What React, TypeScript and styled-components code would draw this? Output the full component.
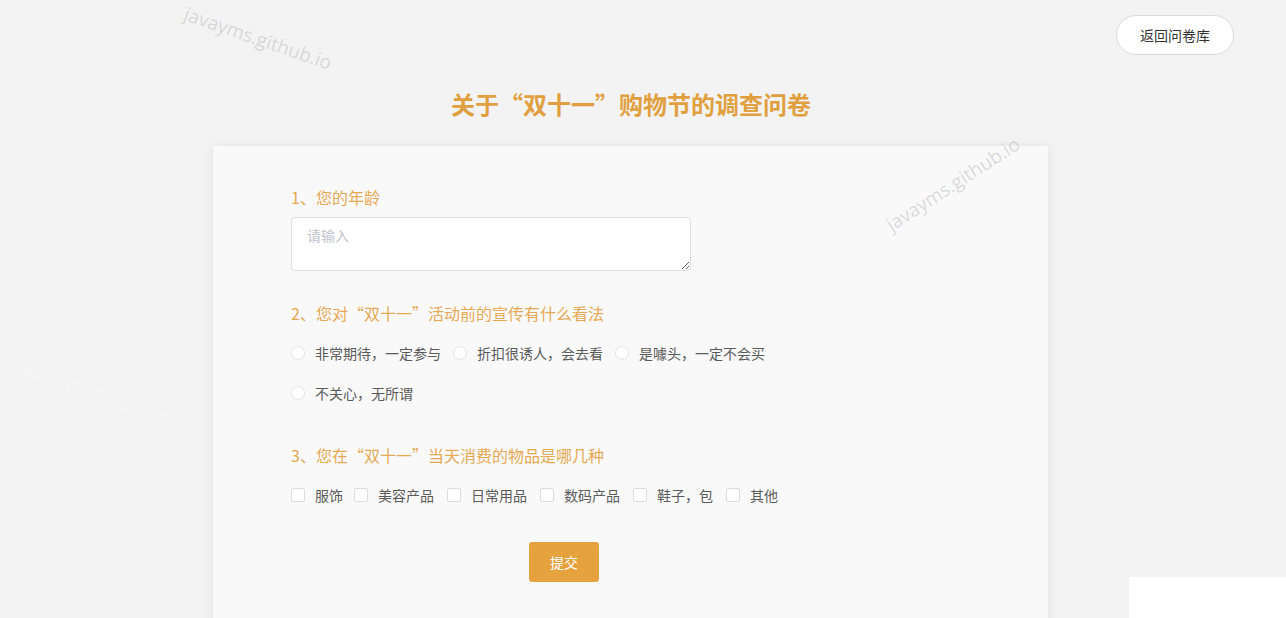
import React from "react";
import styled, { createGlobalStyle } from "styled-components";

const GlobalStyle = createGlobalStyle`
  html, body {
    margin: 0;
    padding: 0;
    background: #f3f3f3;
    font-family: "Noto Sans CJK SC", "Noto Sans", sans-serif;
    overflow: hidden;
  }
`;

const radioOptions = [
  ["非常期待，一定参与", "折扣很诱人，会去看", "是噱头，一定不会买"],
  ["不关心，无所谓"],
];

const checkOptions = ["服饰", "美容产品", "日常用品", "数码产品", "鞋子，包", "其他"];

const App = () => {
  return (
    <Page>
      <GlobalStyle />
      <TopBar>
        <BackButton>返回问卷库</BackButton>
      </TopBar>
      <Title>关于“双十一”购物节的调查问卷</Title>
      <Card>
        <Question>
          <Label>1、您的年龄</Label>
          <TextArea placeholder="请输入" />
        </Question>

        <Question>
          <Label>2、您对“双十一”活动前的宣传有什么看法</Label>
          {radioOptions.map((row, i) => (
            <OptionRow key={i}>
              {row.map((o) => (
                <Option key={o}>
                  <Radio />
                  <OptionText>{o}</OptionText>
                </Option>
              ))}
            </OptionRow>
          ))}
        </Question>

        <Question>
          <Label>3、您在“双十一”当天消费的物品是哪几种</Label>
          <OptionRow>
            {checkOptions.map((o, i) => (
              <Option key={o} $gap={i === 0 ? 11 : 13}>
                <Check />
                <OptionText>{o}</OptionText>
              </Option>
            ))}
          </OptionRow>
        </Question>

        <SubmitWrap>
          <Submit>提交</Submit>
        </SubmitWrap>
      </Card>

      <Watermark $x={185} $y={0} $deg={19}>javayms.github.io</Watermark>
      <Watermark $x={888} $y={213} $deg={-33}>javayms.github.io</Watermark>
      <Watermark $x={20} $y={352} $deg={20} $faint>javayms.github.io</Watermark>
      <Watermark $x={1125} $y={455} $deg={-45} $faint>javayms.github.io</Watermark>
      <Corner />
    </Page>
  );
};

export default App;

const Page = styled.div`
  position: relative;
  width: 100%;
  height: 618px;
  overflow: hidden;
  background: #f3f3f3;
`;

const TopBar = styled.div`
  display: flex;
  justify-content: flex-end;
  padding: 15px 52px 0 0;
`;

const BackButton = styled.button`
  width: 118px;
  height: 40px;
  border-radius: 20px;
  border: 1px solid #dcdcdc;
  background: #fff;
  color: #333;
  font-size: 14px;
  font-family: "Noto Sans CJK SC", sans-serif;
  cursor: pointer;
`;

const Title = styled.h1`
  margin: 34px 0 0;
  padding-right: 24px;
  text-align: center;
  font-size: 24px;
  line-height: 30px;
  font-weight: bold;
  color: #e1a040;
`;

const Card = styled.div`
  margin: 27px 0 0 213px;
  width: 835px;
  height: 520px;
  box-sizing: border-box;
  background: #f9f9f9;
  box-shadow: 0 0 10px rgba(0, 0, 0, 0.07);
  padding: 39px 0 0 78px;
`;

const Question = styled.div`
  margin-bottom: 30px;
`;

const Label = styled.div`
  font-size: 16px;
  line-height: 24px;
  color: #e6a955;
  margin-bottom: 8px;
`;

const TextArea = styled.textarea`
  display: block;
  width: 400px;
  height: 54px;
  box-sizing: border-box;
  border: 1px solid #dcdfe6;
  border-radius: 4px;
  background: #fff;
  padding: 7px 15px;
  font-size: 14px;
  font-family: "Noto Sans CJK SC", sans-serif;
  color: #606266;
  outline: none;
  &::placeholder {
    color: #c0c4cc;
  }
`;

const OptionRow = styled.div`
  display: flex;
  align-items: center;
  height: 40px;
`;

const Option = styled.label<{ $gap?: number }>`
  display: flex;
  align-items: center;
  margin-right: ${(p) => p.$gap ?? 12}px;
`;

const Radio = styled.span`
  width: 12px;
  height: 12px;
  border-radius: 50%;
  border: 1px solid #e3e3e3;
  background: #fff;
  margin-right: 10px;
`;

const Check = styled.span`
  width: 12px;
  height: 12px;
  border-radius: 2px;
  border: 1px solid #dcdcdc;
  background: #fff;
  margin-right: 10px;
`;

const OptionText = styled.span`
  font-size: 14px;
  color: #5a5a5a;
`;

const SubmitWrap = styled.div`
  padding-left: 238px;
  margin-top: -3px;
`;

const Submit = styled.button`
  width: 70px;
  height: 40px;
  border: none;
  border-radius: 3px;
  background: #e6a23c;
  color: #fff;
  font-size: 14px;
  font-family: "Noto Sans CJK SC", sans-serif;
`;

const Watermark = styled.div<{ $x: number; $y: number; $deg: number; $faint?: boolean }>`
  position: absolute;
  left: ${(p) => p.$x}px;
  top: ${(p) => p.$y}px;
  transform: rotate(${(p) => p.$deg}deg);
  transform-origin: left center;
  font-family: "Open Sans", sans-serif;
  font-size: 19px;
  color: ${(p) => (p.$faint ? "rgba(255,255,255,0.25)" : "rgba(180,180,180,0.45)")};
  pointer-events: none;
  white-space: nowrap;
`;

const Corner = styled.div`
  position: absolute;
  left: 1129px;
  top: 577px;
  width: 157px;
  height: 41px;
  background: #fff;
`;
